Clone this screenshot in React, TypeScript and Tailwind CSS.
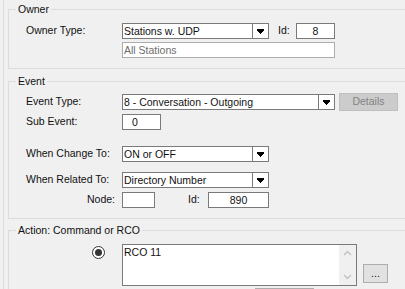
import React from 'react';

const Arrow: React.FC = () => (
    <svg width="7" height="5" viewBox="0 0 7 5" shapeRendering="crispEdges">
        <rect x="0" y="0" width="7" height="2" fill="#000" />
        <rect x="1" y="2" width="5" height="1" fill="#000" />
        <rect x="2" y="3" width="3" height="1" fill="#000" />
        <rect x="3" y="4" width="1" height="1" fill="#000" />
    </svg>
);

const Combo: React.FC<{ value: string; width: string }> = ({ value, width }) => (
    <div className={`${width} h-[16px] flex border border-[#7a7a7a] bg-white`}>
        <span className="flex-1 pl-[1px] leading-[14px] whitespace-nowrap overflow-hidden">{value}</span>
        <span className="w-[16px] border-l border-[#7a7a7a] flex items-center justify-center">
            <Arrow />
        </span>
    </div>
);

const Field: React.FC<{ value: string; className: string }> = ({ value, className }) => (
    <div className={`h-[16px] border border-[#7a7a7a] bg-white leading-[14px] ${className}`}>{value}</div>
);

const Group: React.FC<{ title: string; className?: string; children: React.ReactNode }> = ({ title, className, children }) => (
    <div className={`relative w-[420px] border-l border-t border-b border-[#dcdcdc] pl-[17px] ${className ?? ''}`}>
        <span className="absolute top-[-7px] left-[7px] px-[2px] bg-[#f0f0f0] leading-[13px]">{title}</span>
        {children}
    </div>
);

const Label: React.FC<{ children?: React.ReactNode; right?: boolean }> = ({ children, right }) => (
    <span className={`w-[96px] shrink-0 ${right ? 'text-right pr-[7px]' : ''}`}>{children}</span>
);

export default function App() {
    return (
        <div className="w-[405px] h-[289px] overflow-hidden bg-[#f0f0f0] text-[10.5px] text-[#111111] font-['Liberation_Sans',Arial,sans-serif]">
            <div className="ml-[3px] h-full border-l border-[#dcdcdc] pl-[4px] pt-[9px]">
                <Group title="Owner" className="pt-[13px] pb-[10px]">
                    <div className="flex items-center h-[16px]">
                        <Label>Owner Type:</Label>
                        <Combo value="Stations w. UDP" width="w-[147px]" />
                        <span className="ml-[9px] w-[18px]">Id:</span>
                        <Field value="8" className="w-[39px] text-center" />
                    </div>
                    <div className="flex items-center h-[16px] mt-[3px]">
                        <Label />
                        <div className="w-[213px] h-[16px] border border-[#adadad] bg-white text-[#6d6d6d] leading-[14px] pl-[1px]">All Stations</div>
                    </div>
                </Group>

                <Group title="Event" className="mt-[12px] pt-[12px] pb-[10px]">
                    <div className="flex items-center h-[16px]">
                        <Label>Event Type:</Label>
                        <Combo value="8 - Conversation - Outgoing" width="w-[213px]" />
                        <div className="ml-[4px] w-[59px] h-[18px] border border-[#bfbfbf] bg-[#cccccc] text-[#838383] flex items-center justify-center">Details</div>
                    </div>
                    <div className="flex items-center h-[16px] mt-[4px]">
                        <Label>Sub Event:</Label>
                        <Field value="0" className="w-[39px] pl-[9px]" />
                    </div>
                    <div className="flex items-center h-[16px] mt-[16px]">
                        <Label>When Change To:</Label>
                        <Combo value="ON or OFF" width="w-[147px]" />
                    </div>
                    <div className="flex items-center h-[16px] mt-[10px]">
                        <Label>When Related To:</Label>
                        <Combo value="Directory Number" width="w-[147px]" />
                    </div>
                    <div className="flex items-center h-[16px] mt-[4px]">
                        <Label right>Node:</Label>
                        <Field value="" className="w-[33px]" />
                        <span className="ml-[33px] w-[20px]">Id:</span>
                        <Field value="890" className="w-[61px] text-center" />
                    </div>
                </Group>

                <Group title="Action: Command or RCO" className="mt-[11px] pt-[13px] pb-[10px]">
                    <div className="flex items-start">
                        <div className="w-[96px] shrink-0 pl-[66px] pt-[2px]">
                            <div className="w-[13px] h-[13px] rounded-full border border-[#333333] bg-white flex items-center justify-center">
                                <div className="w-[7px] h-[7px] rounded-full bg-[#333333]" />
                            </div>
                        </div>
                        <div className="w-[235px] h-[42px] border border-[#7a7a7a] bg-white flex">
                            <span className="flex-1 pl-[1px] leading-[14px]">RCO 11</span>
                            <div className="w-[17px] bg-[#f0f0f0] flex flex-col items-center justify-between py-[5px]">
                                <svg width="9" height="6" viewBox="0 0 9 6">
                                    <path d="M1 5 L4.5 1.5 L8 5" fill="none" stroke="#c0c0c0" strokeWidth="1.3" />
                                </svg>
                                <svg width="9" height="6" viewBox="0 0 9 6">
                                    <path d="M1 1 L4.5 4.5 L8 1" fill="none" stroke="#c0c0c0" strokeWidth="1.3" />
                                </svg>
                            </div>
                        </div>
                        <div className="ml-[6px] mt-[20px] w-[25px] h-[19px] border border-[#adadad] bg-[#e1e1e1] flex items-center justify-center leading-none">...</div>
                    </div>
                    <div className="ml-[229px] mt-[2px] w-[59px] h-[18px] border border-[#adadad] bg-[#e1e1e1]" />
                </Group>
            </div>
        </div>
    );
}
